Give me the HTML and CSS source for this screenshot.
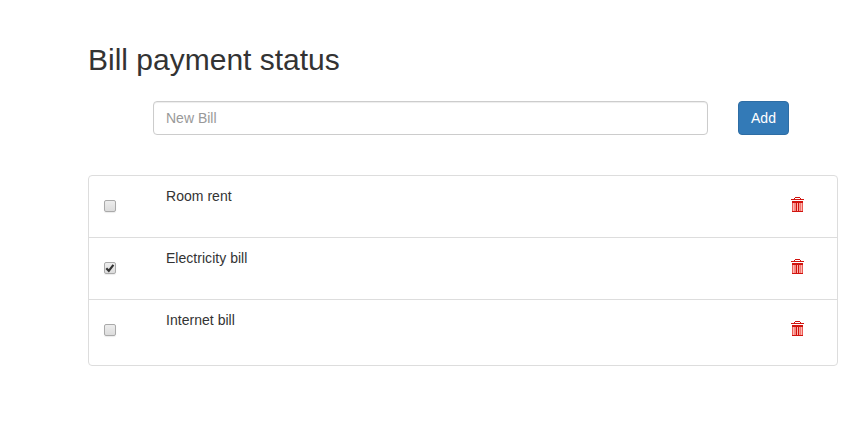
FILE: index.html
```html
<!DOCTYPE html>
<html lang="en">
<head>
<meta charset="utf-8">
<title>Bill payment status</title>
<link rel="stylesheet" href="styles.css">
</head>
<body>
<svg class="defs" width="0" height="0" aria-hidden="true">
  <symbol id="trash" viewBox="0 0 13 15">
    <path class="tint" d="M1 4h11v11H1z"/>
    <path class="edge" d="M1 6h1v8H1zM11 6h1v8h-1zM3.5 6h1v8h-1zM8.7 6h1v8h-1z"/>
    <path class="ink" d="M4 0h5v1H4zM3 1h1v1H3zM9 1h1v1H9zM0 2h13v1H0zM1 4h11v2H1zM1 14h11v1H1zM5 6h1v8H5zM7 6h1v8H7z"/>
  </symbol>
</svg>
<main class="container">
  <h2 class="title">Bill payment status</h2>
  <form class="add-form">
    <input class="field" type="text" placeholder="New Bill">
    <button class="add" type="button">Add</button>
  </form>
  <ul class="list">
    <li class="item">
      <span class="check"></span>
      <span class="name">Room rent</span>
      <svg class="trash" width="13" height="15"><use href="#trash"/></svg>
    </li>
    <li class="item">
      <span class="check"><svg class="tick" width="10" height="10" viewBox="0 0 10 10"><path d="M1.3 5.2 3.8 7.8 8.4 1.8"/></svg></span>
      <span class="name">Electricity bill</span>
      <svg class="trash" width="13" height="15"><use href="#trash"/></svg>
    </li>
    <li class="item">
      <span class="check"></span>
      <span class="name">Internet bill</span>
      <svg class="trash" width="13" height="15"><use href="#trash"/></svg>
    </li>
  </ul>
</main>
</body>
</html>
```
FILE: styles.css
```css
* { box-sizing: border-box; }
body {
  margin: 0;
  background: #fff;
  color: #333;
  font: 14px/20px "Liberation Sans", Arial, sans-serif;
}
.defs { display: block; }
.container { width: 750px; margin-left: 88px; padding-top: 43px; }
.title { margin: 0; font-size: 30px; line-height: 33px; font-weight: 400; }
.add-form { display: flex; gap: 30px; margin: 25px 0 0 65px; }
.field {
  width: 555px;
  height: 34px;
  padding: 6px 12px;
  border: 1px solid #ccc;
  border-radius: 4px;
  box-shadow: inset 0 1px 1px rgba(0, 0, 0, .075);
  font: inherit;
  color: #555;
}
.field::placeholder { color: #999; opacity: 1; }
.add {
  width: 51px;
  height: 34px;
  padding: 0;
  border: 1px solid #2e6da4;
  border-radius: 4px;
  background: #337ab7;
  color: #fff;
  font: inherit;
}
.list {
  margin: 40px 0 0;
  padding: 0;
  list-style: none;
  border: 1px solid #ddd;
  border-radius: 4px;
}
.item {
  display: flex;
  align-items: flex-start;
  height: 62px;
  padding: 10px 33px 0 15px;
  border-bottom: 1px solid #ddd;
}
.item:last-child { height: 65px; border-bottom: 0; }
.check {
  display: flex;
  width: 12px;
  height: 12px;
  margin-top: 14px;
  border: 1px solid #aaa;
  border-radius: 2px;
  background: linear-gradient(#ededed, #dcdcdc);
  box-shadow: 0 1px 1px rgba(0, 0, 0, .08);
}
.tick path { fill: none; stroke: #333; stroke-width: 2.2; }
.name { flex: 1; margin-left: 50px; letter-spacing: .03px; }
.trash { display: block; margin-top: 11px; }
.ink { fill: #d0140f; }
.edge { fill: #ec5a54; }
.tint { fill: #ffb9b2; }
```
